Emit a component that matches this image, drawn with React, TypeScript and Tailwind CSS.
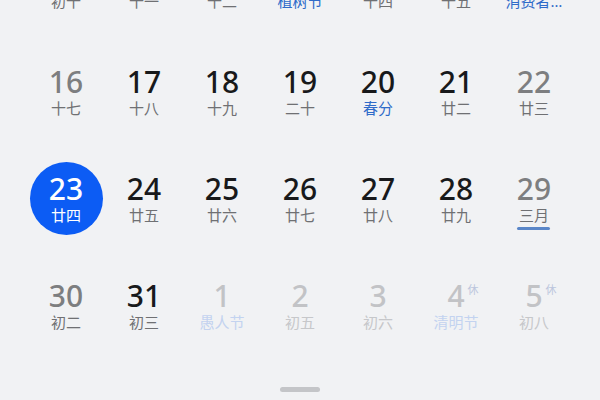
import React from 'react'

type Day = {
  n: number
  lunar: string
  tone?: 'weekend' | 'next'
  blue?: boolean
  rest?: boolean
  today?: boolean
  mark?: boolean
}

const rows: Day[][] = [
  [
    { n: 9, lunar: '初十', tone: 'weekend' },
    { n: 10, lunar: '十一' },
    { n: 11, lunar: '十二' },
    { n: 12, lunar: '植树节', blue: true },
    { n: 13, lunar: '十四' },
    { n: 14, lunar: '十五' },
    { n: 15, lunar: '消费者…', blue: true, tone: 'weekend' },
  ],
  [
    { n: 16, lunar: '十七', tone: 'weekend' },
    { n: 17, lunar: '十八' },
    { n: 18, lunar: '十九' },
    { n: 19, lunar: '二十' },
    { n: 20, lunar: '春分', blue: true },
    { n: 21, lunar: '廿二' },
    { n: 22, lunar: '廿三', tone: 'weekend' },
  ],
  [
    { n: 23, lunar: '廿四', today: true },
    { n: 24, lunar: '廿五' },
    { n: 25, lunar: '廿六' },
    { n: 26, lunar: '廿七' },
    { n: 27, lunar: '廿八' },
    { n: 28, lunar: '廿九' },
    { n: 29, lunar: '三月', tone: 'weekend', mark: true },
  ],
  [
    { n: 30, lunar: '初二', tone: 'weekend' },
    { n: 31, lunar: '初三' },
    { n: 1, lunar: '愚人节', tone: 'next', blue: true },
    { n: 2, lunar: '初五', tone: 'next' },
    { n: 3, lunar: '初六', tone: 'next' },
    { n: 4, lunar: '清明节', tone: 'next', blue: true, rest: true },
    { n: 5, lunar: '初八', tone: 'next', rest: true },
  ],
]

function numClass(d: Day) {
  if (d.today) return 'text-white'
  if (d.tone === 'next') return 'text-[#c2c3c6]'
  if (d.tone === 'weekend') return 'text-[#7d7e80]'
  return 'text-[#18191b]'
}

function lunarClass(d: Day) {
  if (d.today) return 'text-white'
  if (d.tone === 'next') return d.blue ? 'text-[#c3d3f0]' : 'text-[#c6c7ca]'
  if (d.blue) return 'text-[#2f6bc9]'
  return 'text-[#6f7073]'
}

function Cell({ d }: { d: Day }) {
  const body = (
    <div className="relative flex flex-col items-center">
      <div className="relative">
        <span className={`block text-[30px] font-medium leading-[30px] ${numClass(d)}`}>{d.n}</span>
        {d.rest && (
          <span className="absolute -right-[14px] top-[3px] text-[11px] leading-none text-[#bcc6dd]">休</span>
        )}
      </div>
      <span className={`mt-[2px] text-[15px] leading-[18px] whitespace-nowrap ${lunarClass(d)}`}>{d.lunar}</span>
      {d.mark && <span className="absolute -bottom-[6px] h-[3px] w-[33px] rounded-full bg-[#5a86c8]" />}
    </div>
  )

  return (
    <div className="flex h-[107px] items-center justify-center">
      {d.today ? (
        <div className="flex h-[73px] w-[73px] items-center justify-center rounded-full bg-[#0c5cf4]">{body}</div>
      ) : (
        body
      )}
    </div>
  )
}

export default function App() {
  return (
    <div
      className="relative h-[400px] w-[600px] overflow-hidden bg-[#f1f2f4]"
      style={{ fontFamily: '"Noto Sans", "Noto Sans CJK SC", sans-serif' }}
    >
      <div className="-mt-[69px] px-[27px]">
        {rows.map((row, i) => (
          <div key={i} className="grid grid-cols-7">
            {row.map(d => (
              <Cell key={`${i}-${d.n}`} d={d} />
            ))}
          </div>
        ))}
      </div>
      <div className="absolute bottom-[8px] left-1/2 h-[5px] w-[40px] -translate-x-1/2 rounded-full bg-[#c4c5c8]" />
    </div>
  )
}
